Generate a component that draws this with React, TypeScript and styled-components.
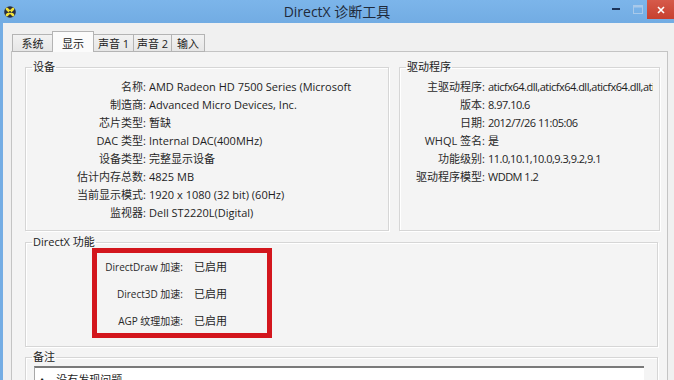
import React from "react";
import styled, { createGlobalStyle } from "styled-components";

const GlobalStyle = createGlobalStyle`
  html, body {
    margin: 0;
    padding: 0;
  }
  body {
    width: 674px;
    height: 380px;
    overflow: hidden;
    background: #f0f0f0;
    font-family: "Open Sans", "Noto Sans CJK SC", sans-serif;
    font-size: 11px;
    color: #1e1e1e;
  }
`;

const Window = styled.div`
  width: 674px;
  height: 380px;
  display: flex;
  flex-direction: column;
  overflow: hidden;
`;

const TitleBar = styled.div`
  height: 23px;
  flex: none;
  display: grid;
  grid-template-columns: 1fr auto 1fr;
  align-items: start;
  background: linear-gradient(#7cb5ea, #72ace3);
`;

const AppIcon = styled.div`
  padding: 6px 0 0 4px;
  height: 12px;
`;

const Title = styled.div`
  font-family: "Open Sans", "Noto Sans CJK SC", sans-serif;
  font-size: 14px;
  line-height: 23px;
  color: #1f2a3a;
`;

const Controls = styled.div`
  display: flex;
  justify-content: flex-end;
`;

const CtrlButton = styled.div<{ $w: number; $close?: boolean }>`
  width: ${(p) => p.$w}px;
  height: 19px;
  display: flex;
  align-items: center;
  justify-content: center;
  background: ${(p) => (p.$close ? "linear-gradient(#d65a4a, #c7402f)" : "transparent")};
`;

const Body = styled.div`
  flex: 1;
  display: flex;
  flex-direction: column;
  background: #f0f0f0;
  border-left: 3px solid #74ade4;
  padding: 9px 6px 0 8px;
  min-height: 0;
`;

const TabStrip = styled.div`
  display: flex;
  align-items: flex-end;
  height: 20px;
  padding-left: 1px;
  margin-bottom: -1px;
  position: relative;
  z-index: 1;
`;

const Tab = styled.div<{ $w: number; $active?: boolean }>`
  box-sizing: border-box;
  width: ${(p) => p.$w}px;
  height: ${(p) => (p.$active ? 21 : 18)}px;
  margin-left: -1px;
  padding-top: ${(p) => (p.$active ? 1 : 0)}px;
  display: flex;
  align-items: center;
  justify-content: center;
  border: 1px solid #b4b4b4;
  border-bottom: ${(p) => (p.$active ? "none" : "1px solid #b4b4b4")};
  background: ${(p) => (p.$active ? "#fbfbfb" : "linear-gradient(#f2f2f2, #e6e6e6)")};
  color: #222;
  position: relative;
  z-index: ${(p) => (p.$active ? 2 : 1)};
  &:first-child {
    margin-left: 0;
  }
`;

const Panel = styled.div`
  flex: 1;
  border: 1px solid #c4c4c4;
  border-bottom: none;
  background: #f4f4f4;
  padding: 9px 7px 0 13px;
`;

const TopGrid = styled.div`
  display: grid;
  grid-template-columns: 364px 1fr;
  column-gap: 10px;
`;

const Group = styled.fieldset<{ $gap?: number; $top?: number; $bottom?: number; $right?: number }>`
  margin: ${(p) => p.$gap ?? 0}px ${(p) => p.$right ?? 0}px 0 0;
  padding: ${(p) => p.$top ?? 4}px 6px ${(p) => p.$bottom ?? 9}px 6px;
  border: 1px solid #d6d6d6;
  box-shadow: inset 1px 1px 0 #ffffff, 1px 1px 0 #ffffff;
  min-width: 0;
`;

const Legend = styled.legend`
  padding: 0 1px;
  line-height: 12px;
  color: #222;
`;

const InfoRows = styled.div<{ $label: number; $tight?: boolean }>`
  display: grid;
  grid-template-columns: ${(p) => p.$label}px 1fr;
  column-gap: 3px;
  grid-auto-rows: 18px;
  align-items: center;
  letter-spacing: ${(p) => (p.$tight ? "-0.5px" : "normal")};
`;

const Label = styled.div<{ $small?: boolean }>`
  text-align: right;
  white-space: nowrap;
  color: #2a2a2a;
  letter-spacing: normal;
  font-size: ${(p) => (p.$small ? 10 : 11)}px;
`;

const Value = styled.div`
  white-space: nowrap;
  overflow: hidden;
  color: #1e1e1e;
`;

const Highlight = styled.div`
  box-sizing: border-box;
  width: 180px;
  margin: 0 0 0 60px;
  border: 5px solid #d3161d;
  padding: 2px 0 2px;
  display: grid;
  grid-template-columns: 86px auto;
  column-gap: 11px;
  row-gap: 5px;
  grid-auto-rows: 22px;
  align-items: center;
`;

const NotesBox = styled.div`
  margin: 3px 7px 0 2px;
  background: #ffffff;
  border-top: 2px solid #7a7a7a;
  border-left: 1px solid #a8a8a8;
  padding: 5px 0 4px 5px;
  display: flex;
  gap: 12px;
  line-height: 13px;
`;

const device: [string, string][] = [
  ["名称:", "AMD Radeon HD 7500 Series (Microsoft"],
  ["制造商:", "Advanced Micro Devices, Inc."],
  ["芯片类型:", "暂缺"],
  ["DAC 类型:", "Internal DAC(400MHz)"],
  ["设备类型:", "完整显示设备"],
  ["估计内存总数:", "4825 MB"],
  ["当前显示模式:", "1920 x 1080 (32 bit) (60Hz)"],
  ["监视器:", "Dell ST2220L(Digital)"],
];

const driver: [string, string][] = [
  ["主驱动程序:", "aticfx64.dll,aticfx64.dll,aticfx64.dll,ati"],
  ["版本:", "8.97.10.6"],
  ["日期:", "2012/7/26 11:05:06"],
  ["WHQL 签名:", "是"],
  ["功能级别:", "11.0,10.1,10.0,9.3,9.2,9.1"],
  ["驱动程序模型:", "WDDM 1.2"],
];

const features: [string, string][] = [
  ["DirectDraw 加速:", "已启用"],
  ["Direct3D 加速:", "已启用"],
  ["AGP 纹理加速:", "已启用"],
];

const tabs = [
  { name: "系统", w: 41 },
  { name: "显示", w: 42, active: true },
  { name: "声音 1", w: 41 },
  { name: "声音 2", w: 39 },
  { name: "输入", w: 34 },
];

const DxLogo = () => (
  <svg width="12" height="12" viewBox="0 0 12 12">
    <circle cx="6" cy="6" r="5.8" fill="#2a2f3f" />
    <path d="M3 3 L9 9 M9 3 L3 9" stroke="#f1e13a" strokeWidth="2.6" strokeLinecap="round" />
    <circle cx="6" cy="6" r="1.1" fill="#2a2f3f" />
  </svg>
);

export default function App() {
  return (
    <>
      <GlobalStyle />
      <Window>
        <TitleBar>
          <AppIcon>
            <DxLogo />
          </AppIcon>
          <Title>DirectX 诊断工具</Title>
          <Controls>
            <CtrlButton $w={24}>
              <svg width="8" height="3" viewBox="0 0 8 3">
                <rect x="0" y="0" width="8" height="2" fill="#1c3358" />
              </svg>
            </CtrlButton>
            <CtrlButton $w={19}>
              <svg width="10" height="9" viewBox="0 0 10 9">
                <rect x="0.5" y="0.5" width="9" height="8" fill="none" stroke="#a9c9ea" />
                <rect x="0.5" y="0.5" width="9" height="2" fill="#a9c9ea" />
              </svg>
            </CtrlButton>
            <CtrlButton $w={27} $close>
              <svg width="8" height="8" viewBox="0 0 8 8">
                <path d="M1 1 L7 7 M7 1 L1 7" stroke="#ffffff" strokeWidth="1.6" />
              </svg>
            </CtrlButton>
          </Controls>
        </TitleBar>
        <Body>
          <TabStrip>
            {tabs.map((t) => (
              <Tab key={t.name} $w={t.w} $active={t.active}>
                {t.name}
              </Tab>
            ))}
          </TabStrip>
          <Panel>
            <TopGrid>
              <Group>
                <Legend>设备</Legend>
                <InfoRows $label={114}>
                  {device.map(([k, v]) => (
                    <React.Fragment key={k}>
                      <Label>{k}</Label>
                      <Value>{v}</Value>
                    </React.Fragment>
                  ))}
                </InfoRows>
              </Group>
              <Group>
                <Legend>驱动程序</Legend>
                <InfoRows $label={79} $tight>
                  {driver.map(([k, v]) => (
                    <React.Fragment key={k}>
                      <Label>{k}</Label>
                      <Value>{v}</Value>
                    </React.Fragment>
                  ))}
                </InfoRows>
              </Group>
            </TopGrid>
            <Group $gap={5} $top={0} $bottom={8} $right={2}>
              <Legend>DirectX 功能</Legend>
              <Highlight>
                {features.map(([k, v]) => (
                  <React.Fragment key={k}>
                    <Label $small>{k}</Label>
                    <Value>{v}</Value>
                  </React.Fragment>
                ))}
              </Highlight>
            </Group>
            <Group $gap={4} $top={0} $right={2}>
              <Legend>备注</Legend>
              <NotesBox>
                <span>•</span>
                <span>没有发现问题。</span>
              </NotesBox>
            </Group>
          </Panel>
        </Body>
      </Window>
    </>
  );
}
